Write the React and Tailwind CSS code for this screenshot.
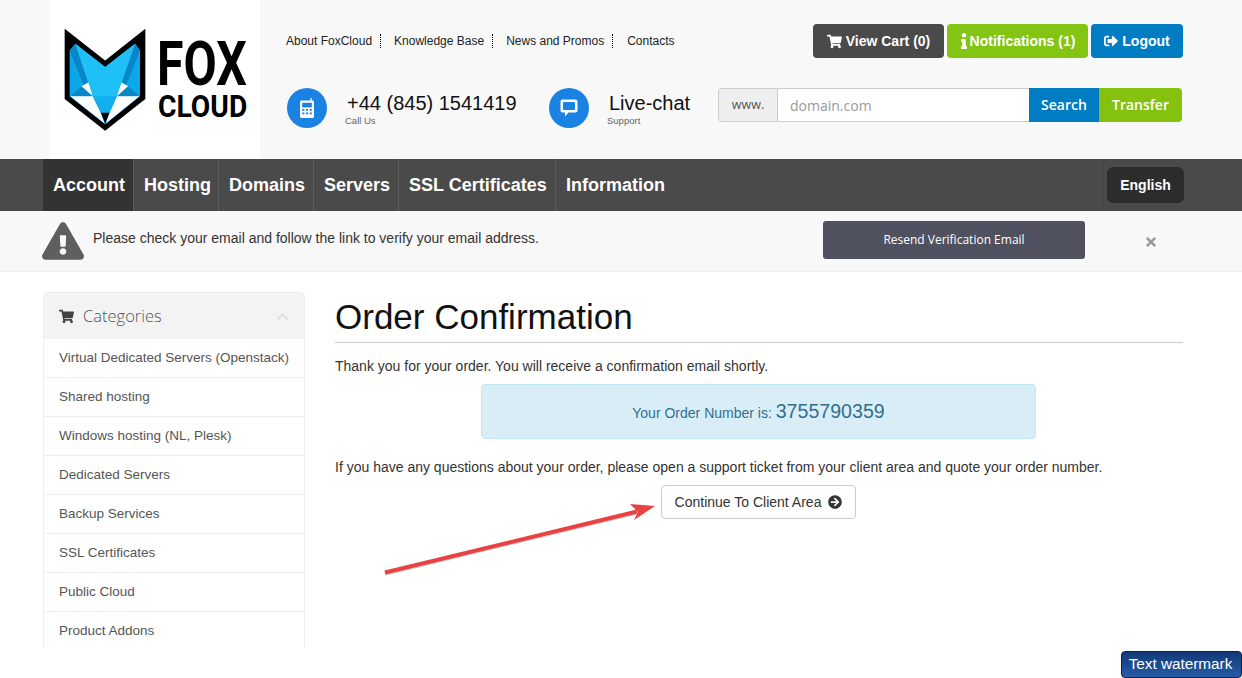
import React from 'react'
import {
  FaShoppingCart,
  FaInfo,
  FaSignOutAlt,
  FaExclamationTriangle,
  FaChevronUp,
  FaArrowCircleRight,
  FaTimes,
} from 'react-icons/fa'

const arial = "font-['Liberation_Sans',Arial,sans-serif]"
const open = "font-['Open_Sans',sans-serif]"

const topLinks = ['About FoxCloud', 'Knowledge Base', 'News and Promos', 'Contacts']
const navItems = [
  ['Account', 'w-[91px] bg-[#333333]'],
  ['Hosting', 'w-[85px]'],
  ['Domains', 'w-[95px]'],
  ['Servers', 'w-[85px]'],
  ['SSL Certificates', 'w-[157px]'],
  ['Information', 'w-[118px] border-r-0'],
]
const categories = [
  'Virtual Dedicated Servers (Openstack)',
  'Shared hosting',
  'Windows hosting (NL, Plesk)',
  'Dedicated Servers',
  'Backup Services',
  'SSL Certificates',
  'Public Cloud',
  'Product Addons',
]

function Logo() {
  return (
    <div className="flex w-[210px] h-[159px] bg-white shrink-0 pl-[13px] overflow-hidden">
      <svg viewBox="70 80 250 315" className="w-[83px] h-[105px] mt-[27px] shrink-0">
        <polygon points="75,85 197,180 318,85 318,296 197,392 75,296" fill="#000" />
        <polygon points="90,150 107,130 197,200 287,130 302,150 302,288 197,372 90,288" fill="#0aa8ea" />
        <polygon points="90,150 107,130 160,288 130,250" fill="#0a86c8" />
        <polygon points="302,150 287,130 232,288 262,250" fill="#0a86c8" />
        <polygon points="92,288 126,258 160,288" fill="#0a86c8" />
        <polygon points="300,288 266,258 232,288" fill="#0a86c8" />
        <polygon points="92,288 160,288 184,338 195,370" fill="#fff" />
        <polygon points="300,288 232,288 210,338 199,370" fill="#fff" />
        <polygon points="126,258 148,245 160,288" fill="#fff" />
        <polygon points="266,258 244,245 232,288" fill="#fff" />
        <polygon points="107,130 197,200 287,130 232,288 210,338 184,338 160,288" fill="#1fc0f8" />
        <polygon points="160,288 232,288 210,338 184,338" fill="#12aef0" />
        <polygon points="184,338 210,338 197,370" fill="#000" />
      </svg>
      <div className="ml-[11px] pt-[42px] font-['Roboto',sans-serif] font-bold text-black whitespace-nowrap">
        <div className="h-[44px] text-[61px] leading-[44px] origin-left scale-x-[.79]">FOX</div>
        <div className="h-[23px] mt-[9px] ml-px text-[31px] leading-[23px] origin-left scale-x-[.91]">CLOUD</div>
      </div>
    </div>
  )
}

function PhoneIcon() {
  return (
    <svg viewBox="0 0 14 20" className="w-[14px] h-[20px]" fill="#fff">
      <path d="M10.5 0h1.2v2.6h.8c.8 0 1.5.7 1.5 1.5v14.4c0 .8-.7 1.5-1.5 1.5h-11C.7 20 0 19.3 0 18.500V4.100c0-.8.7-1.500 1.500-1.500h9z" />
      <rect x="2.200" y="4.800" width="9.600" height="4.600" fill="#1a82e2" />
      <g fill="#1a82e2">
        <rect x="2.200" y="11" width="2.200" height="1.800" />
        <rect x="5.900" y="11" width="2.200" height="1.800" />
        <rect x="9.600" y="11" width="2.200" height="1.800" />
        <rect x="2.200" y="14.500" width="2.200" height="1.800" />
        <rect x="5.900" y="14.500" width="2.200" height="1.800" />
        <rect x="9.600" y="14.500" width="2.200" height="1.800" />
      </g>
    </svg>
  )
}

function ChatIcon() {
  return (
    <svg viewBox="0 0 20 20" className="w-[20px] h-[20px]">
      <path d="M3.500 1.500h13c1.100 0 2 .9 2 2v9c0 1.100-.9 2-2 2H9.500L6 18.500v-4H3.500c-1.100 0-2-.9-2-2v-9c0-1.100.9-2 2-2z" fill="#fff" />
      <rect x="4" y="4" width="12" height="8" rx="1" fill="#1a82e2" />
    </svg>
  )
}

function Contact({ icon, title, sub }) {
  return (
    <div className="flex items-start gap-[20px]">
      <div className="w-10 h-10 rounded-full bg-[#1a82e2] flex items-center justify-center shrink-0">{icon}</div>
      <div className="pt-[3px]">
        <div className={`${arial} text-[20px] leading-[24px] text-[#111]`}>{title}</div>
        <div className={`${arial} text-[9.500px] leading-[11px] text-[#666] -ml-[2px]`}>{sub}</div>
      </div>
    </div>
  )
}

export default function App() {
  return (
    <div className={`relative h-[678px] overflow-hidden bg-white ${arial}`}>
      <div className="h-[648px] overflow-hidden">
        <header className="flex h-[159px] bg-[#f8f8f8] pl-[50px] pr-[59px]">
          <Logo />
          <div className="flex-1 pl-[26px]">
            <div className="flex items-start justify-between pt-[24px] h-[88px]">
              <ul className="flex items-center pt-[10px] text-[12px] leading-[14px] text-[#222]">
                {topLinks.map((l, i) => (
                  <li key={l} className={i < 3 ? 'pr-[8px] mr-[13px] border-r border-dotted border-black' : 'ml-px'}>{l}</li>
                ))}
              </ul>
              <div className="flex gap-[3px] text-[14px] font-bold text-white">
                <button className="flex items-center justify-center gap-1 w-[131px] h-[34px] rounded bg-[#4a4a4a]"><FaShoppingCart className="text-[15px]" />View Cart (0)</button>
                <button className="flex items-center justify-center gap-[2px] w-[141px] h-[34px] rounded bg-[#84c412]"><FaInfo className="w-[8px] h-[16px]" />Notifications (1)</button>
                <button className="flex items-center justify-center gap-1 w-[92px] h-[34px] rounded bg-[#007cc3]"><FaSignOutAlt className="text-[14px]" />Logout</button>
              </div>
            </div>
            <div className="flex items-start">
              <div className="w-[263px] pl-px">
                <Contact icon={<PhoneIcon />} title="+44 (845) 1541419" sub="Call Us" />
              </div>
              <div className="w-[169px]">
                <Contact icon={<ChatIcon />} title="Live-chat" sub="Support" />
              </div>
              <div className={`flex w-[464px] h-[34px] ${open} text-[14px]`}>
                <div className="w-[60px] flex items-center justify-center bg-[#eeeeee] border border-[#cccccc] rounded-l text-[12.500px] text-[#555]">www.</div>
                <input placeholder="domain.com" className="w-[251px] px-3 bg-white border-y border-[#cccccc] placeholder:text-[#999] outline-none" />
                <button className="w-[70px] pb-px bg-[#007cc3] text-white font-semibold">Search</button>
                <button className="w-[83px] pb-px bg-[#84c20f] text-white font-semibold rounded-r">Transfer</button>
              </div>
            </div>
          </div>
        </header>

        <nav className="flex items-center justify-between h-[52px] bg-[#4a4a4a] pl-[43px] pr-[58px]">
          <div className="flex h-full">
            {navItems.map(([label, cls]) => (
              <a key={label} className={`flex items-center pl-[10px] h-full border-r border-[#5c5c5c] text-[18px] font-bold text-white ${cls}`}>{label}</a>
            ))}
          </div>
          <div className="flex items-center h-full border-l border-[#444] pl-[3px]">
            <button className="w-[77px] h-[36px] rounded-md bg-[#2c2c2c] text-[14px] font-bold text-white">English</button>
          </div>
        </nav>

        <div className="flex items-center h-[61px] bg-[#f8f8f8] border-b border-[#eeeeee] pl-[42px]">
          <FaExclamationTriangle className="w-[42px] h-[38px] text-[#5f5f5f] shrink-0" />
          <p className="ml-[9px] w-[730px] text-[14px] text-[#333] -mt-[6px]">Please check your email and follow the link to verify your email address.</p>
          <button className={`${open} w-[262px] h-[38px] -mt-[2px] rounded-[3px] bg-[#50515f] text-[12px] text-white`}>Resend Verification Email</button>
          <FaTimes className="ml-[59px] mt-[2px] text-[14px] text-[#999]" />
        </div>

        <main className="flex gap-[30px] pl-[43px] pr-[59px] pt-[20px]">
          <aside className="w-[262px] shrink-0 border border-[#eeeeee] rounded-t">
            <div className="flex items-center h-[46px] bg-[#f3f3f3] pl-[15px] pr-[15px] text-[#555]">
              <FaShoppingCart className="text-[15px] text-[#444]" />
              <span className={`${open} font-light text-[16.500px] ml-[9px] text-[#555] flex-1`}>Categories</span>
              <FaChevronUp className="text-[13px] text-[#e0e0e0]" />
            </div>
            {categories.map((c) => (
              <div key={c} className="flex items-center h-[39px] px-[15px] border-b border-[#eeeeee] whitespace-nowrap text-[13.500px] text-[#555]">{c}</div>
            ))}
          </aside>

          <section className="flex-1 min-w-0">
            <h1 className="text-[35px] leading-[40px] text-[#111] pt-[5px] pb-[5px] border-b border-[#cccccc]">Order Confirmation</h1>
            <p className="mt-[13px] text-[14px] leading-[20px] text-[#333]">Thank you for your order. You will receive a confirmation email shortly.</p>
            <div className="flex items-center justify-center w-[555px] h-[55px] ml-[146px] mt-[8px] rounded bg-[#d9edf7] border border-[#bce8f1] text-[14px] text-[#31708f]">
              <span>Your Order Number is: <span className="text-[19.600px]">3755790359</span></span>
            </div>
            <p className="mt-[18px] text-[14px] leading-[20px] text-[#333]">If you have any questions about your order, please open a support ticket from your client area and quote your order number.</p>
            <button className="flex items-center justify-center gap-[7px] w-[195px] h-[34px] ml-[326px] mt-[8px] rounded bg-white border border-[#cccccc] text-[14px] text-[#333]">
              Continue To Client Area <FaArrowCircleRight className="text-[14px]" />
            </button>
          </section>
        </main>
      </div>

      {/* annotation arrow */}
      <svg className="absolute left-[380px] top-[495px] w-[280px] h-[85px]" viewBox="0 0 280 85">
        <path d="M5 78.500 L257 17.500" stroke="#8a8a8a" strokeOpacity="0.5" strokeWidth="4" fill="none" />
        <path d="M5 77.500 L257 16.500" stroke="#ea4242" strokeWidth="4" fill="none" />
        <polygon points="275,11 250,9 258,17 254,25" fill="#ea4242" />
      </svg>

      <div className="absolute right-0 bottom-0 flex items-center justify-center w-[121px] h-[27px] pr-[2px] rounded-[4px] border border-[#0a1f44] bg-gradient-to-b from-[#123a78] to-[#245ca6] text-[15.300px] text-white">Text watermark</div>
    </div>
  )
}
